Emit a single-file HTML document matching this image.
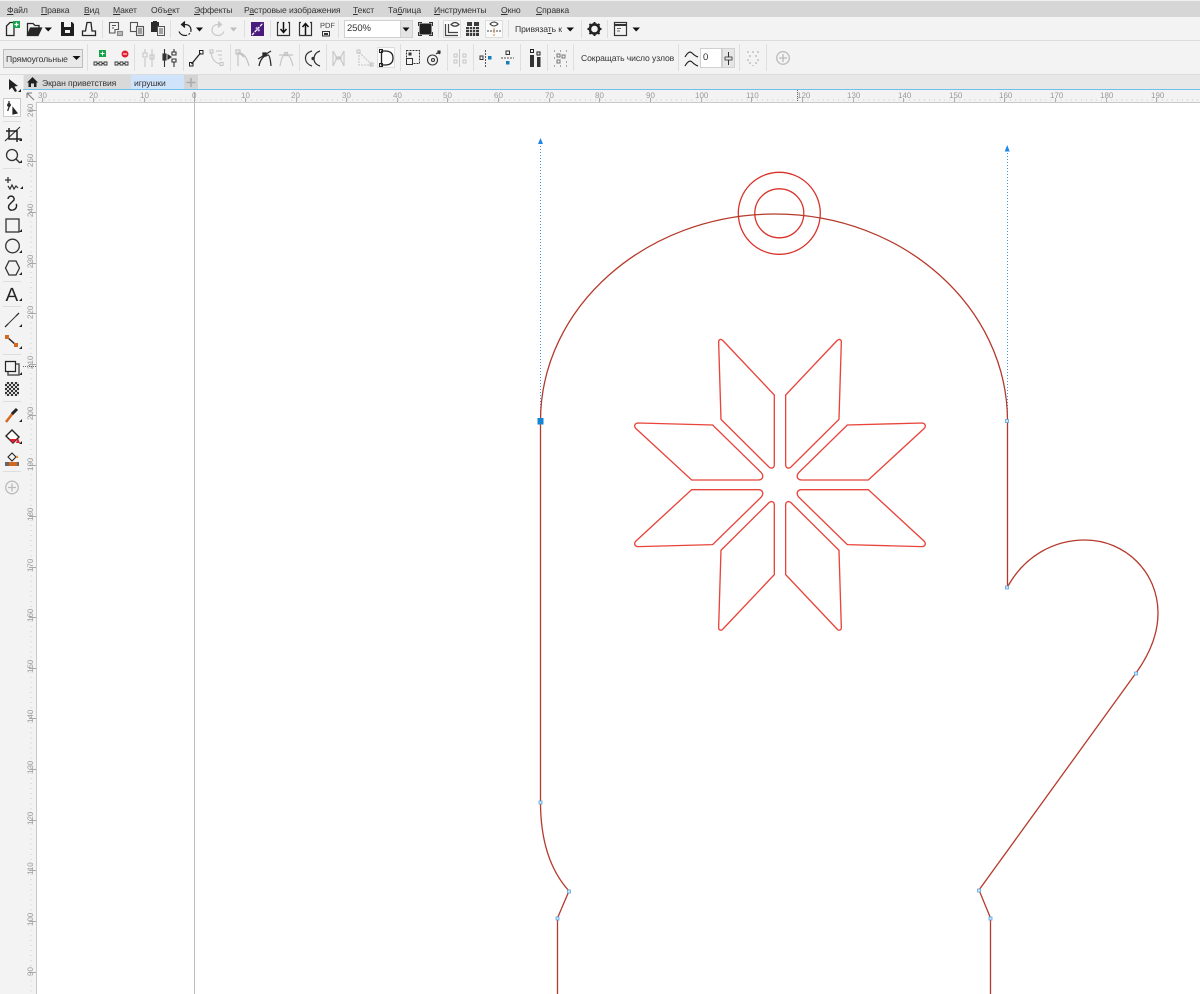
<!DOCTYPE html>
<html lang="ru"><head><meta charset="utf-8"><title>CorelDRAW</title>
<style>
html,body{margin:0;padding:0;background:#fff}
#r{position:relative;width:1200px;height:994px;overflow:hidden;background:#fff;font-family:"Liberation Sans","Noto Sans CJK SC",sans-serif;filter:blur(.3px);text-rendering:geometricPrecision}
.b{position:absolute}
.m{position:absolute;top:4px;font-size:8.6px;letter-spacing:-.1px;line-height:12px;color:#333;white-space:nowrap}
.m u{text-decoration:underline}
.t{position:absolute;font-size:8.6px;letter-spacing:-.1px;line-height:12px;color:#333;white-space:nowrap}
svg{position:absolute;left:0;top:0}
text{font-family:"Liberation Sans",sans-serif}
</style></head><body><div id="r">
<div class="b" style="left:0;top:0;width:1200px;height:1px;background:#f0f0f0"></div>
<div class="b" style="left:0;top:1px;width:1200px;height:16px;background:#d6d6d6"></div>
<div class="b" style="left:0;top:17px;width:1200px;height:23px;background:#f3f3f3"></div>
<div class="b" style="left:0;top:40px;width:1200px;height:1px;background:#dcdcdc"></div>
<div class="b" style="left:0;top:41px;width:1200px;height:33px;background:#f3f3f3"></div>
<div class="b" style="left:0;top:74px;width:1200px;height:1px;background:#dcdcdc"></div>
<div class="b" style="left:0;top:75px;width:23px;height:919px;background:#f3f3f3"></div>
<div class="b" style="left:23px;top:75px;width:1177px;height:14px;background:#e8e8e8"></div>
<div class="b" style="left:24px;top:75px;width:107px;height:14px;background:#d9d9d9"></div>
<div class="b" style="left:131px;top:75px;width:53px;height:14px;background:#cfe3fb"></div>
<div class="b" style="left:184px;top:75px;width:14px;height:14px;background:#d4d4d4"></div>
<div class="b" style="left:23px;top:89px;width:1177px;height:1px;background:#6fc0ea"></div>
<div class="b" style="left:23px;top:90px;width:1177px;height:13px;background:#f3f3f3"></div>
<div class="b" style="left:23px;top:90px;width:13px;height:904px;background:#f3f3f3"></div>
<div class="b" style="left:36px;top:102px;width:1164px;height:1px;background:#c8c8c8"></div>
<div class="b" style="left:36px;top:103px;width:1px;height:891px;background:#c8c8c8"></div>
<div class="b" style="left:194px;top:103px;width:1px;height:891px;background:#bdbdbd"></div>

<span class="m" style="left:7px"><u>Ф</u>айл</span>
<span class="m" style="left:41px"><u>П</u>равка</span>
<span class="m" style="left:84px"><u>В</u>ид</span>
<span class="m" style="left:113px"><u>М</u>акет</span>
<span class="m" style="left:151px">Объ<u>е</u>кт</span>
<span class="m" style="left:194px"><u>Э</u>ффекты</span>
<span class="m" style="left:244px">Р<u>а</u>стровые изображения</span>
<span class="m" style="left:353px"><u>Т</u>екст</span>
<span class="m" style="left:388px">Та<u>б</u>лица</span>
<span class="m" style="left:434px"><u>И</u>нструменты</span>
<span class="m" style="left:501px"><u>О</u>кно</span>
<span class="m" style="left:536px"><u>С</u>правка</span>

<div class="b" style="left:344px;top:20px;width:68px;height:18px;background:#fff;border:1px solid #d0d0d0;box-sizing:border-box"></div>
<div class="b" style="left:400px;top:20px;width:13px;height:18px;background:#e4e4e4;border:1px solid #d0d0d0;box-sizing:border-box"></div>
<span class="t" style="left:347px;top:23px;font-size:9.5px">250%</span>
<span class="t" style="left:515px;top:23px">Привяза<u>т</u>ь к</span>
<div class="b" style="left:3px;top:49px;width:80px;height:19px;background:#e9e9e9;border:1px solid #bdbdbd;box-sizing:border-box"></div>
<span class="t" style="left:6px;top:53px">Прямоугольные</span>
<span class="t" style="left:581px;top:52px">Сокращать число узлов</span>
<div class="b" style="left:700px;top:48px;width:22px;height:20px;background:#fff;border:1px solid #d0d0d0;box-sizing:border-box"></div>
<div class="b" style="left:722px;top:48px;width:13px;height:20px;background:#e6e6e6;border:1px solid #d0d0d0;box-sizing:border-box"></div>
<span class="t" style="left:703px;top:52px;font-size:9.5px">0</span>
<span class="t" style="left:42px;top:77px">Экран приветствия</span>
<span class="t" style="left:134px;top:77px">игрушки</span>
<div class="b" style="left:377px;top:47px;width:18px;height:21px;background:#fbfbfb;border:1px solid #ddd;box-sizing:border-box"></div>
<div class="b" style="left:485px;top:20px;width:18px;height:18px;background:#fbfbfb;border:1px solid #ddd;box-sizing:border-box"></div>
<div class="b" style="left:443px;top:20px;width:18px;height:18px;background:#fbfbfb;border:1px solid #ddd;box-sizing:border-box"></div>
<div class="b" style="left:3px;top:98px;width:18px;height:19px;background:#fdfdfd;border:1px solid #ccc;box-sizing:border-box"></div>

<svg width="1200" height="994" viewBox="0 0 1200 994" fill="none">
<defs>
<path id="pv" d="M310,33 L463,195 L463,403 C463,415 454,417 447,411 L303,268 L296,38 C295,28 303,25 310,33 Z"/>
<path id="ph" d="M55,279 L278,285 L424,428 C433,440 427,450 415,450 L215,450 L48,296 C40,288 45,279 55,279 Z"/>
</defs>

<!-- separators -->
<g stroke="#dedede" stroke-width="1">
<path d="M102.500 20V38M170.500 20V38M244.500 20V38M270.500 20V38M338.500 20V38M438.500 20V38M508.500 20V38M581.500 20V38M607.500 20V38"/>
<path d="M87.500 44V71M134.500 44V71M183.500 44V71M230.500 44V71M299.500 44V71M326.500 44V71M400.500 44V71M447.500 44V71M473.500 44V71M520.500 44V71M547.500 44V71M573.500 44V71M678.500 44V71M739.500 44V71M766.500 44V71"/>
<path d="M3 121.500H21M3 168.500H21M3 281.500H21M3 306.500H21M3 354.500H21M3 401.500H21M3 471.500H21"/>
</g>

<!-- row 1 icons -->
<g stroke="#262626" stroke-width="1.300">
<path d="M6.500 35.500V26L10 22.500H14V35.500Z"/>
<rect x="13" y="21" width="7" height="7" fill="#16a34a" stroke="none"/><path d="M16.500 22.500V26.500M14.500 24.500H18.500" stroke="#fff" stroke-width="1.200"/>
<path d="M27.500 35.500V23.500H33L35 25.500H39V28" /><path d="M27.500 35.500L30.500 28H41.500L38 35.500Z" fill="#262626" stroke="#262626"/>
<path d="M44.500 27.500H52L48.200 31.500Z" fill="#111" stroke="none"/>
<path d="M61 22H72L74 24V36H61Z" fill="#1f1f1f" stroke="none"/><rect x="64" y="22" width="7" height="5" fill="#f3f3f3" stroke="none"/><rect x="65" y="30" width="5" height="3" fill="#f3f3f3" stroke="none"/>
<path d="M82.500 35.500V31H85.500L87 22.500H91L92 31H95.500V35.500Z"/>
</g>
<g stroke="#555" stroke-width="1.100">
<path d="M109.500 22.500H118.500V29.500H115V33H109.500Z"/><path d="M112 25.500H116M112 28H114"/>
<rect x="117.500" y="31.500" width="5" height="4" fill="#bbb" stroke="#888"/>
<rect x="130.500" y="22.500" width="7" height="9"/><rect x="136.500" y="26.500" width="7" height="9" fill="#e8e8e8"/>
<path d="M138 29H142M138 31H142M138 33H142"/>
</g>
<rect x="151" y="22" width="8" height="10" fill="#2b2b2b"/><path d="M153 21h4v2h-4z" fill="#2b2b2b"/><rect x="157.500" y="26.500" width="7" height="9" fill="#eee" stroke="#555"/><path d="M159 29H163M159 31H163M159 33H163" stroke="#555"/>
<g stroke="#222" stroke-width="1.200">
<path d="M182 24.500H185C189 24.500 191 27 191 30C191 33.500 188 35.500 185 35.500C182.500 35.500 180 34 179 31.500" stroke-dasharray="14 1.500 2 1.500"/>
<path d="M185 21.500L181.500 24.500L185 27.500" fill="#222"/>
</g>
<path d="M196 27.500H203L199.500 31.500Z" fill="#111"/>
<g stroke="#c9c9c9" stroke-width="1.200"><path d="M221 24.500H218C214 24.500 212 27 212 30C212 33.500 215 35.500 218 35.500C220.500 35.500 223 34 224 31.500"/><path d="M218 21.500L221.500 24.500L218 27.500" fill="#c9c9c9"/></g>
<path d="M230 27.500H237L233.500 31.500Z" fill="#bdbdbd"/>
<rect x="251" y="22" width="13" height="14" fill="#4a1a7d"/><path d="M252 35L263 23" stroke="#fff" stroke-width="1.300" stroke-dasharray="3 1"/><path d="M256 27.500L259.500 31" stroke="#c9b6e6" stroke-width="2"/>
<g stroke="#333" stroke-width="1.200">
<path d="M279 22.500H277.500V35.500H289.500V22.500H288"/><path d="M283.500 22V32M280.500 29L283.500 32.500L286.500 29" stroke="#111" stroke-width="1.500"/>
<path d="M301 22.500H299.500V35.500H311.500V22.500H310"/><path d="M305.500 24V35M302.500 27L305.500 23.500L308.500 27" stroke="#111" stroke-width="1.500"/>
</g>
<text x="320" y="28" font-size="7.500" fill="#444">PDF</text>
<path d="M322.500 31.500H329.500V36H322.500Z" stroke="#333"/><rect x="324" y="33" width="4" height="2" fill="#333"/>
<path d="M402.500 27.500H409.500L406 31.500Z" fill="#111"/>
<rect x="419.500" y="23.500" width="12" height="11" fill="#1f1f1f" stroke="none"/>
<path d="M418.500 26V22.500H422M429 22.500H432.500V26M432.500 32V35.500H429M422 35.500H418.500V32" stroke="#333" fill="none"/>
<g stroke="#444" stroke-width="1.200">
<path d="M445.500 24V35.500H458M448.500 24V32.500H458"/>
<path d="M451 24.500Q455 20.500 459 24.500Q455 28 451 24.500Z"/>
</g>
<g fill="#3b3b3b">
<rect x="466" y="27" width="13" height="9"/>
<path d="M467 22h5v4h-5zM474 22h5v4h-5z"/>
</g>
<path d="M466 29.500H479M466 32.500H479M469.500 27V36M472.500 27V36M475.500 27V36" stroke="#f3f3f3" stroke-width=".8"/>
<g stroke="#444" stroke-width="1"><path d="M490 24Q494 20 498 24Q494 28 490 24Z"/><path d="M487 31H501" stroke-dasharray="2 1"/><path d="M494 28V37" stroke="#d08a3a" stroke-dasharray="2 1"/></g>
<path d="M566.500 27.500H574L570.200 31.500Z" fill="#111"/>
<circle cx="594.500" cy="29" r="4.600" stroke="#222" stroke-width="2.600"/>
<path d="M594.500 22V24M594.500 34V36M587.500 29H589.500M599.500 29H601.500M589.500 24L591 25.500M598 32.500L599.500 34M589.500 34L591 32.500M598 25.500L599.500 24" stroke="#222" stroke-width="2"/>
<rect x="614.500" y="22.500" width="12" height="13" stroke="#333" stroke-width="1.200"/><path d="M614.500 25H626.500" stroke="#333" stroke-width="2"/><path d="M617 28.500H621M617 31H620" stroke="#666"/>
<path d="M632.500 27.500H640L636.200 31.500Z" fill="#111"/>

<!-- row 2 icons -->
<path d="M72.500 56H80.500L76.500 60Z" fill="#111"/>
<rect x="99" y="50" width="7" height="7" fill="#16a34a"/><path d="M102.500 51.500V55.500M100.500 53.500H104.500" stroke="#fff"/>
<path d="M94 62h3v3h-3zM99 62h3v3h-3zM104 62h3v3h-3zM115 62h3v3h-3zM120 62h3v3h-3zM125 62h3v3h-3z" stroke="#333" stroke-width=".9"/>
<path d="M97 63.500H99M102 63.500H104M118 63.500H120M123 63.500H125" stroke="#333"/>
<circle cx="125" cy="54" r="3.500" fill="#e11d2e"/><path d="M123 54H127" stroke="#fff"/>
<g stroke="#c6c6c6" stroke-width="1.100">
<path d="M145 49V53M145 58V67M152 49V67M143 53h4v4h-4zM150 55h4v4h-4z"/>
</g>
<g stroke="#333" stroke-width="1.100"><path d="M164.500 49V54M164.500 60V67M174 49V52M174 62V67"/><rect x="163" y="54" width="3" height="6" fill="#333"/><path d="M172 52h4v3h-4zM172 59h4v3h-4z"/><path d="M168 55L171 57L168 59Z" fill="#333"/></g>
<path d="M191.500 64L200.500 53" stroke="#222" stroke-width="1.300"/><rect x="189.500" y="62.500" width="3.500" height="3.500" stroke="#222"/><rect x="199.500" y="50.500" width="3.500" height="3.500" stroke="#222"/>
<g stroke="#c6c6c6" stroke-width="1.100"><path d="M211 52Q212 62 220 64"/><rect x="210" y="50" width="3" height="3"/><rect x="220" y="62.500" width="3" height="3"/><path d="M216 51h6M218 55h4M219 59h3"/></g>
<g stroke="#c2c2c2" stroke-width="1.200"><path d="M240 53Q246 54 249 66M238 52L244 57M238 52V66"/><rect x="236" y="50" width="4" height="4"/></g>
<g stroke="#2a2a2a" stroke-width="1.300"><path d="M259 66Q261 56 268 55Q270 55 271 66M258 59L271 51"/><rect x="263" y="53" width="3" height="3" fill="#2a2a2a"/></g>
<g stroke="#c6c6c6" stroke-width="1.200"><path d="M280 66Q282 54 286 54Q290 54 293 66M279 55H293"/><rect x="284.500" y="52.500" width="3" height="3"/></g>
<g stroke="#333" stroke-width="1.200"><path d="M312 51Q305 53 305.500 59Q306 64 312 66M320 51Q314 53 314 59Q314 64 320 66"/><circle cx="313" cy="58.500" r="1" fill="#333"/></g>
<g stroke="#c6c6c6" stroke-width="1.100"><path d="M333 51V66M344 51V66M333 51L337 58L333 66M344 51L340 58L344 66"/><rect x="336" y="57" width="2" height="2"/><rect x="339" y="57" width="2" height="2"/></g>
<g stroke="#c6c6c6" stroke-width="1.100"><path d="M359 52V65H372L359 52" stroke-dasharray="2 1"/><rect x="357" y="50" width="3" height="3"/><rect x="370" y="63" width="3" height="3"/></g>
<path d="M381.500 51H385C392 51 393 55 393 58C393 62 391 65 385 65H381.500Z" stroke="#222" stroke-width="1.300"/>
<rect x="379.500" y="49.500" width="3" height="3" stroke="#222"/><rect x="379.500" y="63.500" width="3" height="3" stroke="#222"/>
<g stroke="#333" stroke-width="1"><rect x="406.500" y="50.500" width="13" height="13" stroke-dasharray="2 1"/><rect x="406.500" y="58.500" width="6" height="6" fill="#f3f3f3"/><rect x="409" y="53" width="2" height="2" fill="#333"/></g>
<g stroke="#333" stroke-width="1.100"><circle cx="432.500" cy="60" r="5"/><circle cx="433" cy="60" r="1.500"/><path d="M436 54Q438 52 440 54" /><rect x="438" y="51" width="2" height="2" fill="#333"/></g>
<g stroke="#c6c6c6"><path d="M459.500 49V67M454 54h3v3h-3zM463 54h3v3h-3zM454 60h3v3h-3zM463 60h3v3h-3z"/></g>
<path d="M485.500 50V67" stroke="#555" stroke-dasharray="2 1"/><rect x="480" y="56" width="3" height="3.500" stroke="#333"/><rect x="488" y="56" width="3.500" height="3.500" fill="#157db8"/>
<path d="M501 58H514" stroke="#555" stroke-dasharray="2 1"/><rect x="506" y="51" width="3.500" height="3.500" stroke="#333"/><rect x="506" y="61" width="3.500" height="3.500" fill="#157db8"/>
<g stroke="#222" fill="none"><rect x="530.500" y="49.500" width="3" height="3"/><rect x="537" y="52" width="3" height="3"/></g><rect x="530" y="55" width="4" height="12" fill="#333"/><rect x="537" y="57" width="3.500" height="10" fill="#333"/>
<g stroke="#777" fill="none"><rect x="557" y="54" width="3" height="3"/><rect x="562" y="55" width="3" height="3"/><rect x="557" y="60" width="3" height="3"/><path d="M554 51h1M566 51h1M554 58h1M566 62h1M560 51h1M560 66h1M554 66h1M566 66h1" stroke-width="1.200"/></g>
<path d="M685 57Q689 50 692 53Q695 56 698 57M685 66Q689 59 692 62Q695 65 698 66" stroke="#222" stroke-width="1.200"/>
<path d="M728.500 52V65M724.500 58.500H732.500" stroke="#333"/><rect x="725" y="57" width="7" height="3" fill="#e6e6e6" stroke="#333" stroke-width=".8"/>
<g fill="#cdcdcd"><path d="M747 51h2v2h-2zM752 51h2v2h-2zM757 51h2v2h-2zM749 55h2v2h-2zM755 55h2v2h-2zM747 59h2v2h-2zM757 59h2v2h-2zM749 62h2v2h-2zM755 62h2v2h-2zM752 65h2v1h-2z"/></g>
<circle cx="783" cy="58" r="6.300" stroke="#bbb" stroke-width="1.300"/><path d="M783 54V62M779 58H787" stroke="#bbb" stroke-width="1.300"/>

<!-- tabs -->
<path d="M27 82.500L32.500 77L38 82.500H36.500V87H34V83.500H31V87H28.500V82.500Z" fill="#222"/>
<path d="M191 78V87M186.500 82.500H195.500" stroke="#aaa" stroke-width="1.500"/>

<!-- rulers -->
<g stroke="#a9a9a9" stroke-width="1">
<path d="M42.500 98V102M93.500 98V102M144.500 98V102M194.500 92V102M245.500 98V102M296.500 98V102M346.500 98V102M397.500 98V102M447.500 98V102M498.500 98V102M549.500 98V102M599.500 98V102M650.500 98V102M701.500 98V102M751.500 98V102M802.500 98V102M853.500 98V102M903.500 98V102M954.500 98V102M1004.500 98V102M1055.500 98V102M1106.500 98V102M1156.500 98V102"/>
<path d="M43.500 100H1200" stroke="#c8c8c8" stroke-dasharray="1 4.060"/>
<path d="M31 110V994" stroke="#c8c8c8" stroke-dasharray="1 4.060"/>
<path d="M29 110.500H36M29 161.500H36M29 212.500H36M29 263.500H36M29 313.500H36M29 364.500H36M29 415.500H36M29 465.500H36M29 516.500H36M29 567.500H36M29 617.500H36M29 668.500H36M29 718.500H36M29 769.500H36M29 820.500H36M29 870.500H36M29 921.500H36M29 972.500H36" />
</g>
<path d="M797.500 90V102" stroke="#666" stroke-dasharray="1 1"/>
<path d="M23 366.500H36" stroke="#666" stroke-dasharray="1 1"/>
<g font-size="8" fill="#9a9a9a">
<text x="38" y="98">30</text><text x="89" y="98">20</text><text x="140" y="98">10</text><text x="192" y="98">0</text>
<text x="241" y="98">10</text><text x="291" y="98">20</text><text x="342" y="98">30</text><text x="393" y="98">40</text><text x="443" y="98">50</text><text x="494" y="98">60</text><text x="545" y="98">70</text><text x="595" y="98">80</text><text x="646" y="98">90</text><text x="695" y="98">100</text><text x="746" y="98">110</text><text x="797" y="98">120</text><text x="847" y="98">130</text><text x="898" y="98">140</text><text x="949" y="98">150</text><text x="999" y="98">160</text><text x="1050" y="98">170</text><text x="1100" y="98">180</text><text x="1151" y="98">190</text>
</g>
<g font-size="8" fill="#9a9a9a">
<text transform="translate(33 117) rotate(-90)">260</text><text transform="translate(33 167) rotate(-90)">250</text><text transform="translate(33 217) rotate(-90)">240</text><text transform="translate(33 268) rotate(-90)">230</text><text transform="translate(33 319) rotate(-90)">220</text><text transform="translate(33 369) rotate(-90)">210</text><text transform="translate(33 420) rotate(-90)">200</text><text transform="translate(33 471) rotate(-90)">190</text><text transform="translate(33 521) rotate(-90)">180</text><text transform="translate(33 572) rotate(-90)">170</text><text transform="translate(33 622) rotate(-90)">160</text><text transform="translate(33 673) rotate(-90)">150</text><text transform="translate(33 723) rotate(-90)">140</text><text transform="translate(33 774) rotate(-90)">130</text><text transform="translate(33 825) rotate(-90)">120</text><text transform="translate(33 875) rotate(-90)">110</text><text transform="translate(33 926) rotate(-90)">100</text><text transform="translate(33 976) rotate(-90)">90</text>
</g>
<path d="M27 93H32M27 93V98M27 93L34 100" stroke="#777"/>

<!-- left toolbox -->
<path d="M9 80L9 91L12 88.500L15 93L17 92L14.500 87.500L18 87Z" fill="#222" transform="translate(0,-1)"/>
<path d="M18 92h3v-3z" fill="#222"/>
<g stroke="#222" stroke-width="1.200"><path d="M9 101V107C9 109 7.500 109 8 111"/><circle cx="9" cy="105" r="1.300"/><path d="M13 108L17 113L13 114Z" fill="#222"/></g>
<g stroke="#222" stroke-width="1.500"><path d="M9 128V139H21M6 131H17V142"/><path d="M5 141L20 127" stroke-width="1"/></g>
<path d="M19 141h3v-3z M19 163h3v-3z M20 189h3v-3z M19 232h3v-3z M19 253h3v-3z M19 275h3v-3z M19 301h3v-3z M19 327h3v-3z M19 349h3v-3z M19 375h3v-3z M19 422h3v-3z M19 444h3v-3z" fill="#222"/>
<circle cx="12" cy="155" r="5.500" stroke="#333" stroke-width="1.300"/><path d="M16 159L20 163" stroke="#333" stroke-width="1.500"/>
<path d="M8 177V183M5 180H11" stroke="#333" stroke-width="1.300"/><path d="M8 186L10 189L12 185L14 189L16 186L18 188" stroke="#333" stroke-width="1.200"/>
<path d="M8 199C8 195 15 195 14 200L10 204C7 207 9 211 13 210C17 209 17 205 16 204" stroke="#222" stroke-width="1.400"/>
<rect x="6" y="219" width="13" height="13" stroke="#333" stroke-width="1.300"/>
<circle cx="12.500" cy="246" r="6.800" stroke="#333" stroke-width="1.300"/>
<path d="M9 261H16L19.500 268L16 275H9L5.500 268Z" stroke="#333" stroke-width="1.300"/>
<text x="5.500" y="301" font-size="19" fill="#222">A</text>
<path d="M6 326L18 314" stroke="#333" stroke-width="1"/><path d="M5 327L8 324M16 316L19 313" stroke="#333" stroke-width="1.300"/>
<path d="M7 337L16 345" stroke="#222" stroke-width="1.500"/><rect x="5" y="335" width="4" height="4" fill="#d2691e"/><rect x="14" y="343" width="4" height="4" fill="#d2691e"/>
<path d="M5.500 361.500H15.500V371.500H5.500Z" stroke="#222" stroke-width="1.200"/><path d="M16 364H19V375H8V372" stroke="#555" stroke-width="1.500"/>
<rect x="5" y="382" width="14" height="14" fill="#333"/>
<path d="M5 382h2v2h-2zM9 382h2v2h-2zM13 382h2v2h-2zM17 382h2v2h-2zM7 384h2v2h-2zM11 384h2v2h-2zM15 384h2v2h-2zM5 386h2v2h-2zM9 386h2v2h-2zM13 386h2v2h-2zM17 386h2v2h-2zM7 388h2v2h-2zM11 388h2v2h-2zM15 388h2v2h-2zM5 390h2v2h-2zM9 390h2v2h-2zM13 390h2v2h-2zM17 390h2v2h-2zM7 392h2v2h-2zM11 392h2v2h-2zM15 392h2v2h-2zM5 394h2v2h-2zM9 394h2v2h-2zM13 394h2v2h-2zM17 394h2v2h-2z" fill="#ddd"/>
<path d="M6 422L13 413" stroke="#d2691e" stroke-width="2.500"/><path d="M12 414L17 409" stroke="#222" stroke-width="3"/>
<path d="M6 436L12 430L19 437L13 443Z" stroke="#222" stroke-width="1.400" fill="#fff"/><path d="M9 439H17L13 443Z" fill="#e11d2e"/><path d="M18 438L20 443H16Z" fill="#e11d2e"/>
<path d="M8 457L12 453L16 457L12 461Z" stroke="#222" stroke-width="1.100"/><path d="M17 455L18.500 458H15.500Z" fill="#e8862e"/>
<rect x="5" y="462" width="14" height="4" fill="#666"/><rect x="9" y="462" width="8" height="4" fill="#d2691e"/>
<circle cx="12" cy="487.500" r="6.300" stroke="#bbb" stroke-width="1.300"/><path d="M12 483.500V491.500M8 487.500H16" stroke="#bbb" stroke-width="1.300"/>

<!-- guides -->
<path d="M540.500 146V421" stroke="#3a96e6" stroke-width="1" stroke-dasharray="1 2"/>
<path d="M1007.500 153V421" stroke="#3a96e6" stroke-width="1" stroke-dasharray="1 2"/>
<path d="M540.500 138L538 144H543Z" fill="#1d86e8"/>
<path d="M1007.200 145L1004.700 151.500H1009.700Z" fill="#1d86e8"/>

<!-- drawing -->
<g stroke="#d8332a" stroke-width="1.300" fill="none">
<circle cx="779.300" cy="213.300" r="41"/>
<circle cx="779.300" cy="213.300" r="24.500"/>
</g>
<path d="M540.500 421C540.500 307 646 214 775 214C903 214 1007.500 307 1007.500 421V587C1025 555 1055 540 1085 540C1125 540 1158 572 1158 613C1158 635 1149 655 1136 673L979 890L990.500 918V994M540.500 421V802C540.500 840 550 870 569 891L557.500 918V994" stroke="#b53a2c" stroke-width="1.300"/>
<g transform="translate(620 330) scale(.3333)" stroke="#e8443a" stroke-width="4" fill="none">
<use href="#pv"/><use href="#ph"/>
<g transform="translate(960 0) scale(-1 1)"><use href="#pv"/><use href="#ph"/></g>
<g transform="translate(0 929) scale(1 -1)"><use href="#pv"/><use href="#ph"/></g>
<g transform="translate(960 929) scale(-1 -1)"><use href="#pv"/><use href="#ph"/></g>
</g>

<!-- nodes -->
<rect x="537.500" y="418" width="6" height="6.500" fill="#1586d6"/>
<g fill="#cfe6fa" stroke="#5aa5e0" stroke-width=".8">
<rect x="1005.500" y="419.500" width="3" height="3"/>
<rect x="1005.500" y="586" width="3" height="3"/>
<rect x="1134.500" y="672" width="3" height="3"/>
<rect x="977.500" y="889" width="3" height="3"/>
<rect x="989" y="917" width="3" height="3"/>
<rect x="539" y="801" width="3" height="3"/>
<rect x="567.500" y="890" width="3" height="3"/>
<rect x="556" y="917" width="3" height="3"/>
</g>
</svg>
</div></body></html>
